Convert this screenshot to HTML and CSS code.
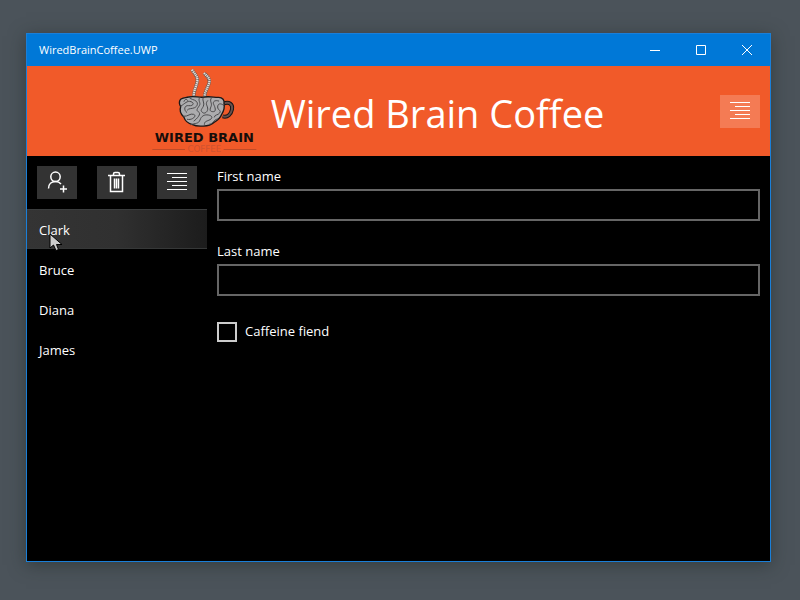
FILE: index.html
```html
<!DOCTYPE html>
<html lang="en">
<head>
<meta charset="utf-8">
<title>WiredBrainCoffee.UWP</title>
<link rel="stylesheet" href="styles.css">
</head>
<body>
<div class="window">
  <div class="titlebar">
    <span class="caption">WiredBrainCoffee.UWP</span>
    <button class="winbtn" type="button" aria-label="Minimize"><svg width="10" height="10"><path d="M0 5.5h10"/></svg></button>
    <button class="winbtn" type="button" aria-label="Maximize"><svg width="10" height="10"><path d="M.5 .5h9v9h-9z"/></svg></button>
    <button class="winbtn" type="button" aria-label="Close"><svg width="10" height="10"><path d="M0 0l10 10M10 0L0 10"/></svg></button>
  </div>
  <header class="header">
    <div class="brand">
      <svg class="logo" viewBox="12 6 348 270" role="img" aria-label="Wired Brain Coffee logo">
        <g fill="none">
          <path class="steam-edge" d="M153 17C160 30 170 34 169 50S157 78 158 100M189 27C197 36 207 40 205 54S190 82 191 100"/>
          <path class="steam" d="M153 17C160 30 170 34 169 50S157 78 158 100M189 27C197 36 207 40 205 54S190 82 191 100"/>
          <path class="handle-edge" d="M249 118C264 112 276 121 273 136S260 161 245 157"/>
          <path class="handle" d="M249 118C264 112 276 121 273 136S260 161 245 157"/>
        </g>
        <path class="cup" d="M117 109C119 101 132 102 143 99C160 95 176 102 190 99C207 96 222 101 233 100C245 100 251 109 249 119C252 132 247 143 242 151C238 163 227 171 218 176C205 188 168 189 155 182C141 178 132 170 129 160C119 150 115 138 119 128C115 121 114 114 117 109Z"/>
        <g class="folds">
          <path d="M120 126C132 119 138 109 150 113S156 127 143 125S127 138 137 145"/>
          <path d="M128 157C142 158 147 147 158 151S154 170 139 166"/>
          <path d="M143 99C148 107 160 106 166 112S169 127 161 131S143 132 139 138"/>
          <path d="M176 101C169 110 181 116 175 125S164 139 173 144S168 164 159 171"/>
          <path d="M186 101C183 111 192 117 187 127S177 138 184 145S202 142 200 132S192 119 200 110"/>
          <path d="M211 102C204 112 215 117 210 128S207 143 217 143S222 129 218 121S222 107 233 111"/>
          <path d="M248 124C238 116 230 119 230 129S242 139 236 147S222 150 220 159"/>
          <path d="M150 182C163 177 173 180 177 168S190 151 202 153S216 162 207 167S190 171 190 181"/>
          <path d="M129 112C131 104 139 105 140 109M205 181C218 179 216 167 230 165"/>
        </g>
        <text class="logo-name" x="190" y="234">WIRED BRAIN</text>
        <text class="logo-sub" x="190" y="264">COFFEE</text>
        <path class="rule" d="M34 256.5h98M248 256.5h98"/>
      </svg>
      <h1>Wired Brain Coffee</h1>
    </div>
    <button class="tool header-tool" type="button" aria-label="Switch side"><svg width="40" height="33"><path d="M10 7.500h20M15 11.500h15M10 15.500h20M15 19.500h15M10 23.500h20"/></svg></button>
  </header>
  <div class="content">
    <aside class="sidebar">
      <div class="tools">
        <button class="tool" type="button" aria-label="Add customer"><svg class="round" width="40" height="33"><circle cx="18.500" cy="10.800" r="4.700"/><path d="M11.500 22.500C11.500 18 14.500 15.500 18.500 15.500C21 15.500 22.800 16.500 24 18M26.500 19.500v7M23 23h7"/></svg></button>
        <button class="tool" type="button" aria-label="Delete customer"><svg class="round" width="40" height="33"><path d="M11 9.500h17M13.500 10v15.500h12v-15.500M16.500 9V8Q16.500 6.500 18 6.500h3Q22.500 6.500 22.500 8v1M17.500 12.500v10M19.500 12.500v10M21.500 12.500v10"/></svg></button>
        <button class="tool" type="button" aria-label="Move list"><svg width="40" height="33"><path d="M10 7.500h20M15 11.500h15M10 15.500h20M15 19.500h15M10 23.500h20"/></svg></button>
      </div>
      <ul class="list">
        <li class="selected">Clark
          <svg class="cursor" width="15" height="20" viewBox="0 0 15 20" aria-hidden="true"><path d="M1 1V15L4.500 12L7 17.500L9.500 16.500L7.500 11.500H13Z"/></svg>
        </li>
        <li>Bruce</li>
        <li>Diana</li>
        <li>James</li>
      </ul>
    </aside>
    <main class="details">
      <label class="label" for="first">First name</label>
      <input class="field" id="first" type="text">
      <label class="label" for="last">Last name</label>
      <input class="field" id="last" type="text">
      <div class="check">
        <input id="fiend" type="checkbox">
        <label for="fiend">Caffeine fiend</label>
      </div>
    </main>
  </div>
</div>
</body>
</html>
```
FILE: styles.css
```css
* {
  box-sizing: border-box;
}

body {
  margin: 0;
  min-height: 100vh;
  padding: 33px 29px 38px 26px;
  display: flex;
  background: #4b535a;
  color: #fff;
  font: 14px/20px "Open Sans", "Noto Sans", sans-serif;
}

button {
  border: 0;
  padding: 0;
  color: inherit;
}

svg {
  display: block;
}

.window {
  flex: 1;
  display: flex;
  flex-direction: column;
  border: 1px solid #1a7fd8;
  background: #000;
  box-shadow: 0 3px 16px rgba(30, 40, 35, 0.5);
}

.titlebar {
  display: flex;
  height: 32px;
  background: #0078d7;
}

.caption {
  flex: 1;
  padding-left: 12px;
  font-size: 11px;
  font-weight: 500;
  line-height: 32px;
}

.winbtn {
  display: grid;
  place-items: center;
  width: 46px;
  background: transparent;
}

.winbtn svg,
.tool svg {
  fill: none;
  stroke: #fff;
  stroke-width: 1;
}

.header {
  display: flex;
  align-items: center;
  height: 90px;
  padding-right: 10px;
  background: #f15a29;
}

.brand {
  flex: 1;
  display: flex;
  justify-content: center;
  align-items: center;
  gap: 10px;
  padding-left: 2px;
}

.brand h1 {
  margin: 0;
  padding-top: 4px;
  font-size: 38px;
  font-weight: 400;
  line-height: 48px;
  white-space: nowrap;
}

.logo {
  width: 116px;
  height: 90px;
}

.steam-edge {
  stroke: #6e5850;
  stroke-width: 10;
}

.steam {
  stroke: #e2dfdb;
  stroke-width: 7;
  stroke-dasharray: 4 2;
}

.handle-edge {
  stroke: #191515;
  stroke-width: 12;
}

.handle {
  stroke: #65504d;
  stroke-width: 6;
}

.cup {
  fill: #acacae;
  stroke: #1c1818;
  stroke-width: 4;
}

.folds {
  fill: none;
  stroke: #4a494b;
  stroke-width: 3;
  stroke-linecap: round;
}

.logo-name {
  fill: #160d0a;
  font: 700 39px "DejaVu Sans", sans-serif;
  text-anchor: middle;
}

.logo-sub {
  fill: #cf5330;
  font: 400 26px "DejaVu Sans", sans-serif;
  text-anchor: middle;
}

.rule {
  stroke: #a94628;
  stroke-width: 2;
}

.tool {
  width: 40px;
  height: 33px;
  background: #333;
}

.tool .round {
  stroke-width: 1.500;
}

.header-tool {
  background: #f47b54;
}

.content {
  flex: 1;
  display: flex;
}

.sidebar {
  width: 180px;
}

.tools {
  display: flex;
  gap: 20px;
  padding: 10px;
}

.list {
  list-style: none;
  margin: 0;
  padding: 0;
}

.list li {
  position: relative;
  padding: 2px 12px 0;
  line-height: 38px;
  font-size: 13px;
}

.list .selected {
  background: linear-gradient(90deg, #343434, #303030 50%, #1c1c1c);
  box-shadow: inset 0 1px #3b3d3e, inset 0 -1px #363838;
}

.cursor {
  position: absolute;
  left: 22px;
  top: 24px;
  fill: #ccc;
  stroke: #000;
}

.details {
  flex: 1;
  padding: 10px;
  font-size: 13px;
}

.label {
  display: block;
  padding-bottom: 3px;
}

.field {
  display: block;
  width: 100%;
  height: 32px;
  margin: 0 0 20px;
  padding: 3px 10px;
  border: 2px solid #666;
  background: #000;
  color: #fff;
  font: inherit;
}

.check {
  display: flex;
  align-items: flex-start;
  gap: 8px;
  padding-top: 6px;
  line-height: 18px;
}

.check input {
  appearance: none;
  width: 20px;
  height: 20px;
  margin: 0;
  border: 2px solid #ccc;
  background: #000;
}
```
